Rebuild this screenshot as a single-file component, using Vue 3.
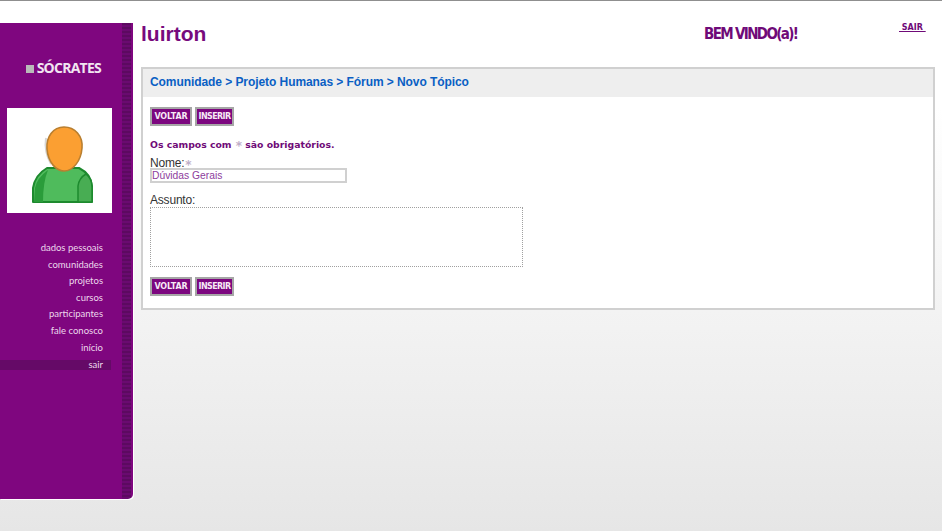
<script setup>
const menu = ['dados pessoais', 'comunidades', 'projetos', 'cursos', 'participantes', 'fale conosco', 'início', 'sair']
</script>

<template>
  <div class="page">
    <aside class="sidebar">
      <div class="brand"><i class="square"></i><span>SÓCRATES</span></div>
      <div class="avatar">
        <svg width="105" height="105" viewBox="0 0 105 105">
          <path d="M26 94 L26 80 Q28 67 40 60 L72 60 Q84 66 85 78 L85 94 Z" fill="#4fbb5c" stroke="#1d8a2e" stroke-width="2" stroke-linejoin="round"/>
          <path d="M27 94 L28 80 Q30 70 41 62 Q36 74 36 94 Z" fill="#2a9c3a"/>
          <path d="M71 94 L71 78 Q72 70 79 66 Q85 71 85 79 L85 94 Z" fill="#48ad53" stroke="#1d8a2e" stroke-width="1.5" stroke-linejoin="round"/>
          <path d="M39 30 Q37 44 44 56" fill="none" stroke="#d6d6d6" stroke-width="2"/>
          <path d="M57 19 C46 19 39 29 40 41 C41 54 49 63 57 63 C66 63 74 53 75 40 C76 28 68 19 57 19 Z" fill="#fb9f32" stroke="#b97f30" stroke-width="1.6"/>
        </svg>
      </div>
      <nav class="menu">
        <a v-for="item in menu" :key="item" :class="{ active: item === 'sair' }">{{ item }}</a>
      </nav>
    </aside>

    <main class="content">
      <header class="topbar">
        <h1>luirton</h1>
        <div class="welcome">BEM VINDO(a)!</div>
        <a class="logout">&nbsp;SAIR&nbsp;</a>
      </header>

      <section class="card">
        <div class="crumbs">Comunidade &gt; Projeto Humanas &gt; Fórum &gt; Novo Tópico</div>
        <div class="body">
          <div class="buttons">
            <button>VOLTAR</button>
            <button class="tight">INSERIR</button>
          </div>
          <p class="note">Os campos com <span class="star">*</span> são obrigatórios.</p>
          <label class="label first">Nome:<span class="star">*</span></label>
          <input class="field" value="Dúvidas Gerais" />
          <label class="label second">Assunto:</label>
          <textarea class="area"></textarea>
          <div class="buttons bottom">
            <button>VOLTAR</button>
            <button class="tight">INSERIR</button>
          </div>
        </div>
      </section>
    </main>
  </div>
</template>

<style scoped>
.page {
  width: 942px;
  height: 531px;
  box-sizing: border-box;
  border-top: 1px solid #8f8f8f;
  padding-top: 22px;
  display: flex;
  align-items: flex-start;
  overflow: hidden;
  background: linear-gradient(#fff 0, #fff 105px, #e6e6e6 531px);
  font-family: "Liberation Sans", Arial, sans-serif;
}
.sidebar {
  width: 133px;
  height: 476px;
  flex: none;
  box-sizing: border-box;
  border-bottom-right-radius: 5px;
  box-shadow: 1px 1px 0 #fff;
  background:
    repeating-linear-gradient(#5c0a60 0 2px, #6a0a70 2px 4px) 122px 0 / 9px 100% no-repeat,
    #7f067f;
  padding-top: 36px;
}
.brand {
  height: 16px;
  display: flex;
  align-items: center;
  justify-content: flex-end;
  padding-right: 32px;
  gap: 3px;
  color: #f1e4f1;
  font: 700 14px "Open Sans", sans-serif;
  letter-spacing: -0.75px;
}
.square {
  width: 8px;
  height: 8px;
  margin-top: 3px;
  background: #b9b9b9;
}
.avatar {
  width: 105px;
  height: 105px;
  margin: 33px 0 0 7px;
  background: #fff;
  display: flex;
}
.avatar svg {
  filter: blur(0.4px);
}
.menu {
  margin-top: 27px;
  display: flex;
  flex-direction: column;
}
.menu a {
  height: 16.6px;
  width: 111px;
  box-sizing: border-box;
  padding-right: 8px;
  text-align: right;
  color: #ecd8ec;
  font: 9.5px/16.6px "Lato", sans-serif;
}
.menu a.active {
  background: #650a67;
  height: 10px;
  line-height: 10px;
  margin-top: 4px;
}
.content {
  flex: 1;
  min-width: 0;
  padding: 0 7px 0 8px;
}
.topbar {
  height: 44px;
  position: relative;
}
.topbar h1 {
  margin: 0;
  color: #770a7d;
  font: 700 21px/21px "Liberation Sans", sans-serif;
}
.welcome {
  position: absolute;
  left: 563px;
  top: 2px;
  color: #6f0a78;
  font: 700 15px/18px "DejaVu Sans Condensed", "DejaVu Sans", sans-serif;
  letter-spacing: -1.65px;
}
.logout {
  position: absolute;
  left: 758px;
  top: 0;
  color: #6f0a78;
  font: 700 8px/10px "DejaVu Sans", sans-serif;
  text-decoration: underline;
}
.card {
  height: 243px;
  box-sizing: border-box;
  border: 2px solid #d0d0d0;
  background: #fff;
}
.crumbs {
  height: 28px;
  background: #eeeeee;
  padding-left: 7px;
  color: #0a5fc4;
  font: 700 12px/26px "Liberation Sans", sans-serif;
  letter-spacing: -0.07px;
}
.body {
  padding: 10px 7px 0;
}
.buttons {
  display: flex;
  gap: 3px;
}
.buttons button {
  width: 42px;
  height: 19px;
  padding: 0;
  border: 2px solid #a6a6a6;
  background: #7c067f;
  color: #f6e9f6;
  font: 700 8px/15px "DejaVu Sans", sans-serif;
  letter-spacing: -0.1px;
}
.buttons button.tight {
  width: 39px;
  letter-spacing: -0.6px;
}
.note {
  margin: 12px 0 0;
  height: 13px;
  color: #6f0a78;
  font: 700 9.3px/13px "DejaVu Sans", sans-serif;
}
.star {
  color: #c0aec8;
  font: 700 12px/0 "DejaVu Sans", sans-serif;
  vertical-align: -2px;
  margin-left: 1px;
}
.label {
  display: block;
  height: 12px;
  color: #333;
  font: 12px/12px "Liberation Sans", sans-serif;
  letter-spacing: -0.2px;
}
.label.first { margin-top: 6px; height: 11px; }
.label.second { margin-top: 11px; height: 13px; line-height: 12px; }
.field {
  display: block;
  width: 197px;
  height: 15px;
  box-sizing: border-box;
  border: 2px solid #d0d0d0;
  padding: 0;
  color: #8e3c9c;
  font: 10.3px/11px "Liberation Sans", sans-serif;
  outline: none;
}
.area {
  display: block;
  width: 373px;
  height: 60px;
  box-sizing: border-box;
  border: 1px dotted #a0a0a0;
  resize: none;
  outline: none;
  margin: 0;
  background: transparent;
}
.bottom { margin-top: 10px; }
</style>
